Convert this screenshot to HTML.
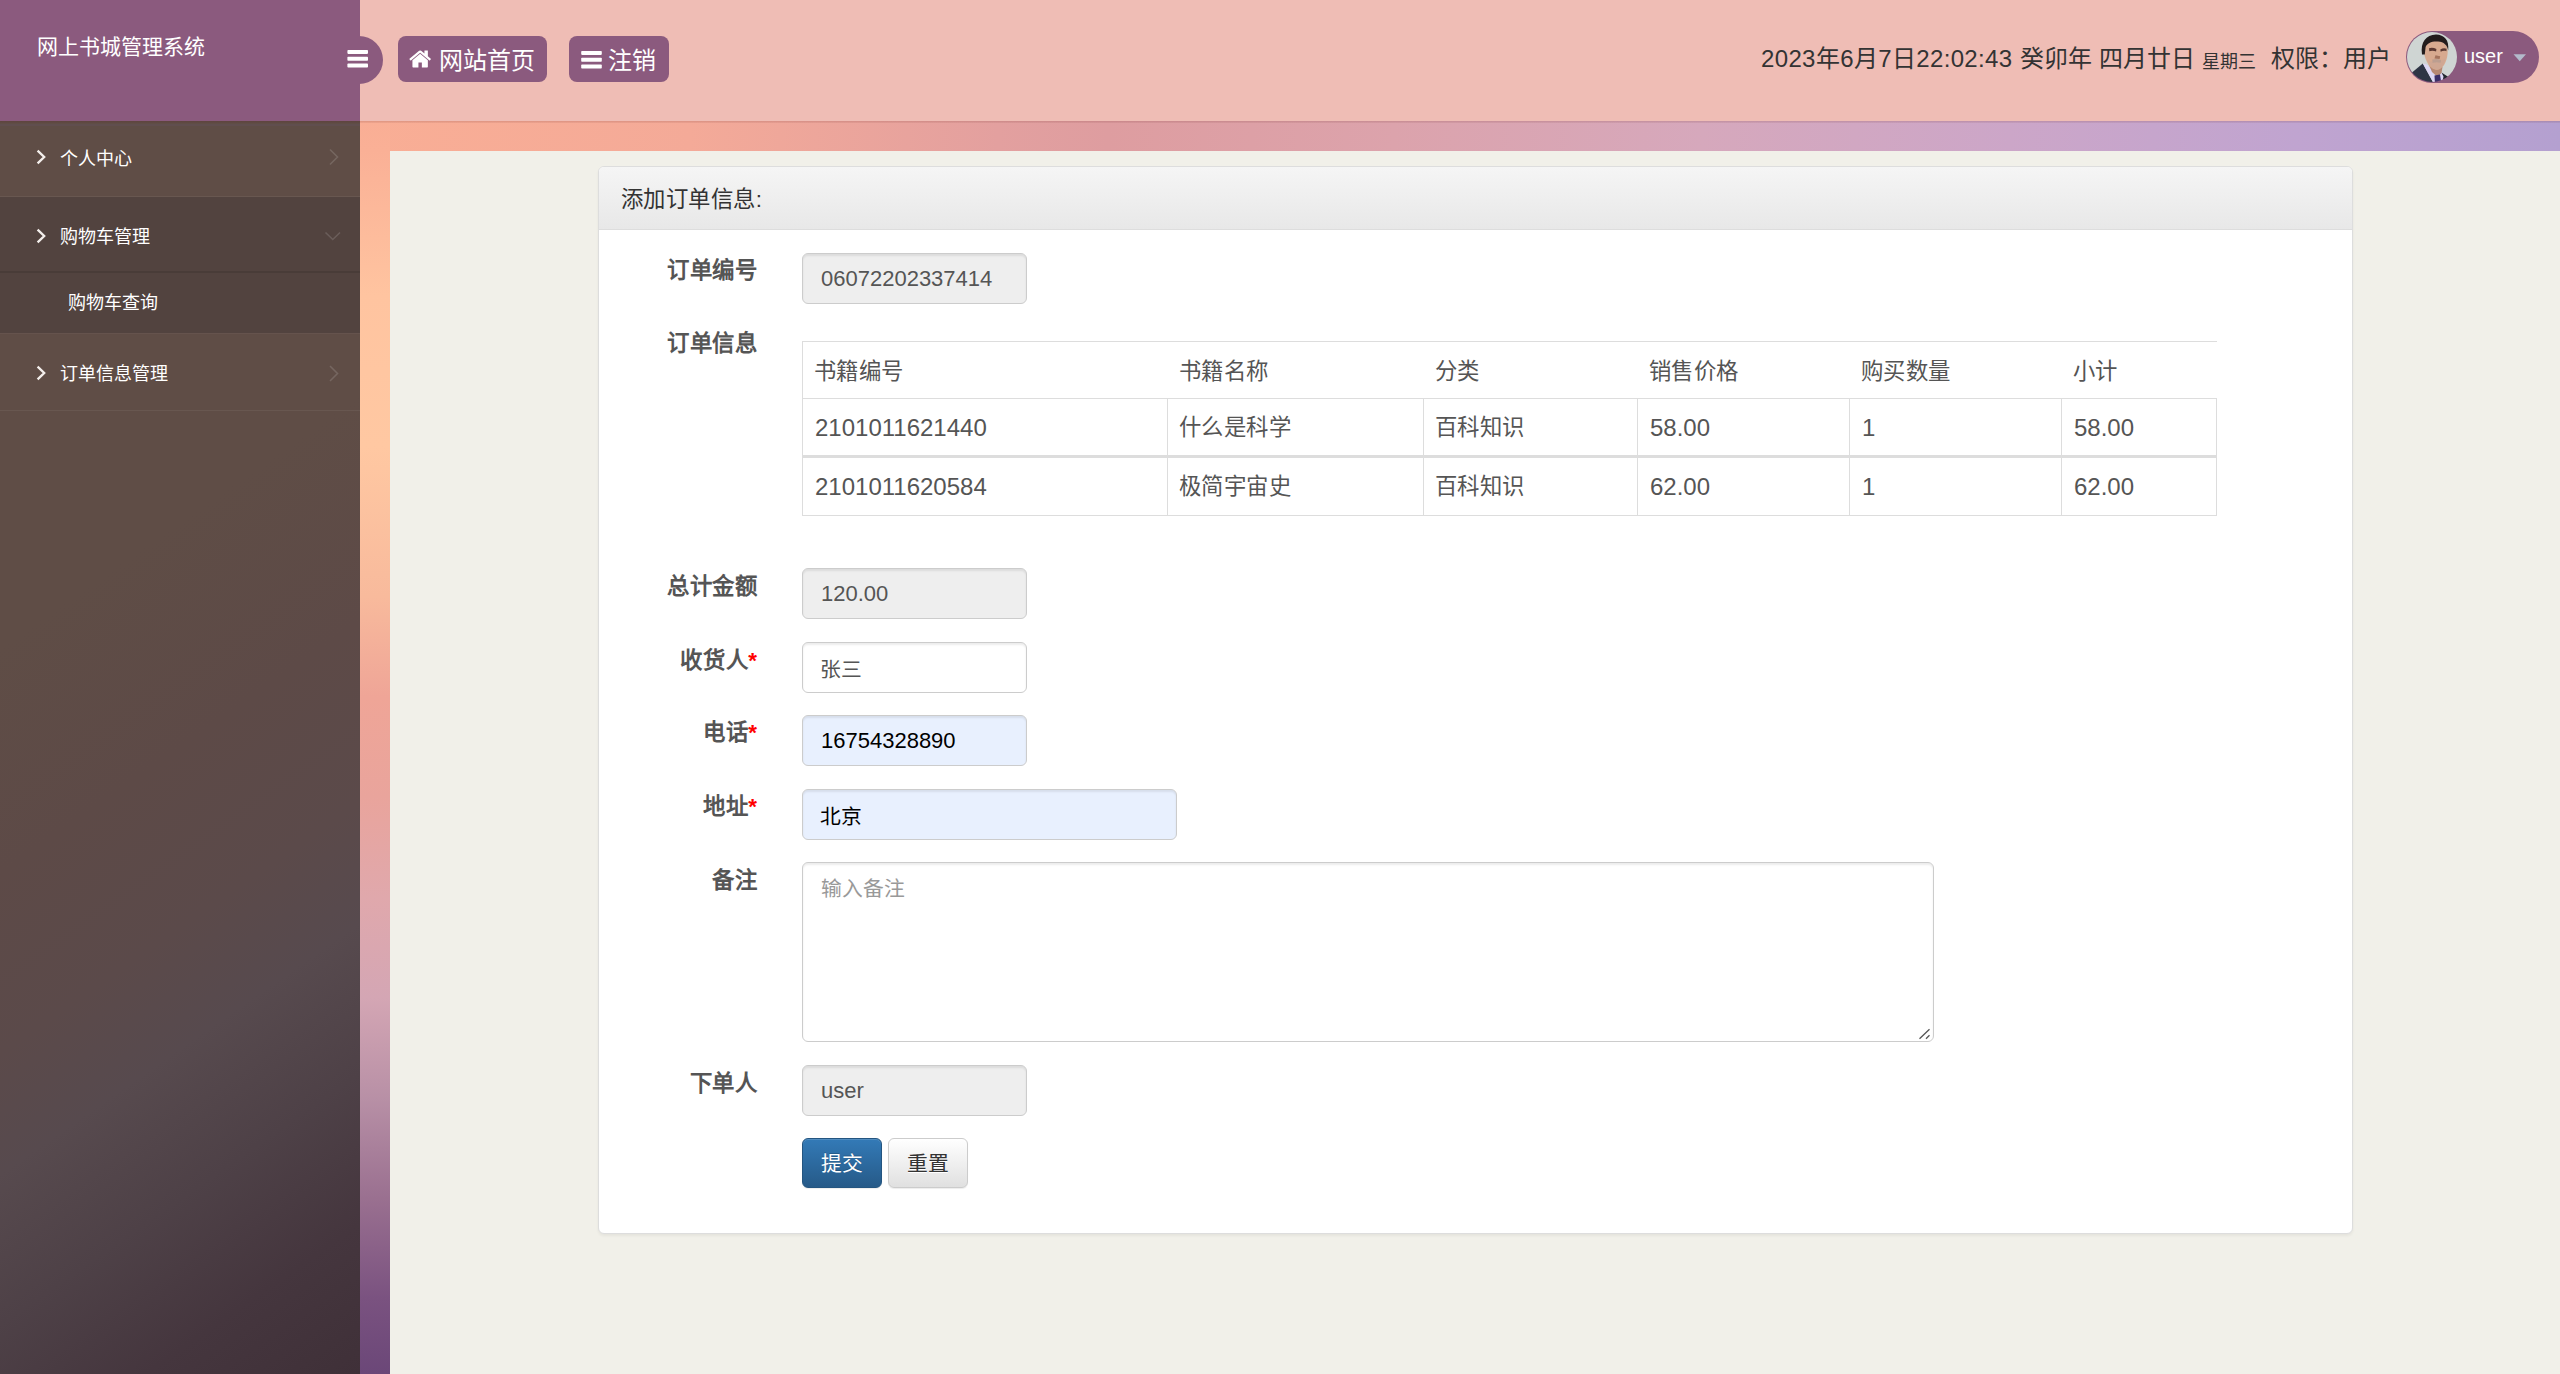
<!DOCTYPE html>
<html lang="zh-CN">
<head>
<meta charset="utf-8">
<title>网上书城管理系统</title>
<style>
*{box-sizing:border-box;margin:0;padding:0}
html,body{width:2560px;height:1374px;overflow:hidden}
body{position:relative;font-family:"Liberation Sans",sans-serif;background:#f1f0e9;color:#555}
.abs{position:absolute}
/* background strips */
#bgTop{left:360px;top:120px;width:2200px;height:31px;
 background:linear-gradient(90deg,#f9ae95 0%,#f4aa98 15%,#e3a09f 29%,#de9da0 34%,#dca3ac 47%,#d6a8bc 61%,#cca6c8 75%,#c0a4d0 88%,#b4a0d0 100%)}
#bgLeft{left:360px;top:120px;width:30px;height:1254px;
 background:linear-gradient(180deg,#f9ae95 0%,#fab096 2.4%,#ffc4a0 14%,#ffc8a2 26%,#f8ba9c 38%,#efa597 46%,#e9a49c 54%,#e0a8ac 62%,#d4a6b4 70%,#b890a6 78%,#9a7090 86%,#7a5280 94%,#6b4778 100%)}
#content{left:390px;top:151px;width:2170px;height:1223px;background:#f1f0e9}
/* sidebar */
#brand{left:0;top:0;width:360px;height:121px;background:#8b5a7e}
#brand span{left:37px;top:33px;font-size:21px;line-height:28px;color:#fff;white-space:nowrap}
#sidebar{left:0;top:121px;width:360px;height:1253px;
 background:linear-gradient(145deg,#5f4d46 0%,#5f4d46 35%,#5d4a47 50%,#5b4a4a 62%,#574a4e 70%,#4e4147 80%,#45363e 90%,#3f3038 100%)}
.mi{left:0;width:360px;color:#fff;font-size:18px;white-space:nowrap}
.mi span{position:absolute;line-height:24px}
/* header */
#header{left:0;top:0;width:2560px;height:121px;background:#efbdb5;}
.hbtn{background:#8b5a7e;border-radius:8px;color:#fff;font-size:24px;white-space:nowrap}
.hbtn span{position:absolute;line-height:30px}
.ht{color:#333;font-size:24px;line-height:30px;white-space:nowrap}
/* panel */
#panel{left:598px;top:166px;width:1755px;height:1068px;background:#fff;border:1px solid #ddd;border-radius:6px;box-shadow:0 2px 3px rgba(0,0,0,.05)}
#phead{left:0;top:0;width:1753px;height:63px;background:linear-gradient(180deg,#f5f5f5,#e8e8e8);border-bottom:1px solid #ddd;border-radius:5px 5px 0 0}
#phead span{left:22px;top:18.1px;letter-spacing:.45px;font-size:22.4px;line-height:30px;color:#333;white-space:nowrap}
.lbl{width:200px;text-align:right;letter-spacing:.6px;margin-left:.6px;font-weight:bold;font-size:22.4px;line-height:30px;color:#555;white-space:nowrap}
.lbl b{color:#f00}
.inp{height:51px;border:1px solid #ccc;border-radius:6px;background:#fff;box-shadow:inset 0 2px 2px rgba(0,0,0,.075);font-size:22px;color:#555;white-space:nowrap}
.inp span{position:absolute;left:18px;top:11px;line-height:28px}
.inp.dis{background:#eee}
.inp.af{background:#e8f0fe;color:#000}

.tl{background:#ddd}
.th,.td{white-space:nowrap;color:#555;line-height:30px}
.th{font-size:22.4px;letter-spacing:.45px;margin-left:-1px}
.td{font-size:22.4px;letter-spacing:.45px;margin-left:-1px}
.td.n{font-size:24px;letter-spacing:0;margin-left:0}
.btn{height:50px;width:80px;border-radius:6px;font-size:20.8px;text-align:center;line-height:49.5px;white-space:nowrap}
</style>
</head>
<body>
<div id="bgTop" class="abs"></div>
<div id="bgLeft" class="abs"></div>
<div id="content" class="abs"></div>
<div id="header" class="abs"></div>
<!-- header widgets -->
<div class="abs" style="left:335px;top:36px;width:48px;height:48px;border-radius:24px;background:#8b5a7e"></div>
<svg class="abs" style="left:347px;top:49px;z-index:5" width="22" height="20" viewBox="0 0 22 20"><g fill="#fff"><rect x=".4" y="1" width="20.6" height="3.9" rx=".8"/><rect x=".4" y="7.8" width="20.6" height="3.9" rx=".8"/><rect x=".4" y="14.6" width="20.6" height="3.9" rx=".8"/></g></svg>
<div class="abs hbtn" style="left:398px;top:36px;width:149px;height:46px">
 <svg class="abs" style="left:11.4px;top:11.4px" width="22.3" height="24" viewBox="0 0 1664 1792"><path fill="#fff" d="M1408 992v480q0 26-19 45t-45 19h-384v-384h-256v384h-384q-26 0-45-19t-19-45v-480q0-1 .5-3t.5-3l575-474 575 474q1 2 1 6zm223-69l-62 74q-8 9-21 11h-3q-13 0-21-7l-692-577-692 577q-12 8-24 7-13-2-21-11l-62-74q-8-10-7-23.500t11-21.500l719-599q32-26 76-26t76 26l244 204v-195q0-14 9-23t23-9h192q14 0 23 9t9 23v408l219 182q10 8 11 21.500t-7 23.500z"/></svg>
 <span style="left:41px;top:9.5px">网站首页</span>
</div>
<div class="abs hbtn" style="left:569px;top:36px;width:100px;height:46px">
 <svg class="abs" style="left:12px;top:14px" width="22" height="20" viewBox="0 0 22 20"><g fill="#fff"><rect x=".2" y="1" width="20.6" height="3.9" rx=".8"/><rect x=".2" y="7.8" width="20.6" height="3.9" rx=".8"/><rect x=".2" y="14.6" width="20.6" height="3.9" rx=".8"/></g></svg>
 <span style="left:39px;top:9.5px">注销</span>
</div>
<span class="abs ht" style="left:1761px;top:43.5px;letter-spacing:.35px">2023年6月7日22:02:43</span>
<span class="abs ht" style="left:2020px;top:43.5px">癸卯年</span>
<span class="abs ht" style="left:2099px;top:43.5px">四月廿日</span>
<span class="abs ht" style="left:2202px;top:49.5px;font-size:18px;line-height:24px">星期三</span>
<span class="abs ht" style="left:2271px;top:43.5px">权限：用户</span>
<div class="abs" style="left:2406px;top:31px;width:133px;height:52px;border-radius:26px;background:#8b5a7e"></div>
<svg class="abs" style="left:2407px;top:32px" width="50" height="50" viewBox="0 0 50 50">
 <defs><clipPath id="av"><circle cx="25" cy="25" r="25"/></clipPath><filter id="bl" x="-10%" y="-10%" width="120%" height="120%"><feGaussianBlur stdDeviation=".75"/></filter></defs>
 <g clip-path="url(#av)"><g filter="url(#bl)">
  <rect x="-5" y="-5" width="60" height="60" fill="#cfd5d3"/>
  <path d="M2 43 L15.800 31.400 L27 52 L2 52Z" fill="#2f3545"/>
  <path d="M34.500 40.500 L41.500 45 L45 52 L33 52Z" fill="#23262f"/>
  <path d="M15.800 31.400 L20 32.500 L30 44 L34.500 40.500 L36.500 44.500 L35 52 L27 52Z" fill="#dcd6f4"/>
  <path d="M21.500 32 L35.500 35 L34.500 41 L30.500 45 L25 40Z" fill="#b68873"/>
  <path d="M27.500 43.500 L33 42.500 L34.500 52 L28 52Z" fill="#3a2f68"/>
  <path d="M16.800 17 C16.800 11 21 8.300 28 8.300 C36 8.300 40.700 12 40.700 19 C40.700 27 37.500 35 32 37.500 C28 39 23 36 20 30 C18 26 16.800 22 16.800 17Z" fill="#d7a98f"/>
  <path d="M20.500 28 C25 31 33 31 38.500 26 C37 33 34.500 36.500 31.500 37.600 C27.500 38.600 23.500 35 20.500 28Z" fill="#c8a598" opacity=".55"/>
  <path d="M15 22.500 C13.300 10 19 3 29 2.600 C37.500 3 42.300 8 41.200 18.500 C40.200 13 37 10 31 9.500 C25 9 20 11 18.600 15 L17.800 22.500Z" fill="#211b1e"/>
  <path d="M22 16.300 C24 15.300 27 15.600 29.400 17 L29.100 19.500 C27 18.400 24 18.400 22.300 19.200Z" fill="#5a3933"/>
  <path d="M33.300 17.400 C35.500 16 38 16 39.600 16.800 L39.400 19.200 C37.500 18.600 35.500 18.800 33.700 19.800Z" fill="#5a3933"/>
  <path d="M28.500 23.300 L33.200 24.300 L32.600 27 L27.500 26.500Z" fill="#a4735d"/>
  <path d="M25.300 27.600 C28 26.600 31.500 26.900 34 28.100 L33.600 30.700 C31 30 28 30 25.500 30.700Z" fill="#b59b90" opacity=".8"/>
 </g></g>
</svg>
<span class="abs" style="left:2464px;top:43px;font-size:20px;line-height:26px;color:#fff">user</span>
<svg class="abs" style="left:2513px;top:54px" width="14" height="8" viewBox="0 0 14 8"><path d="M.5 .3 L13 .3 L6.750 7.200Z" fill="#b3bacb"/></svg>
<div id="brand" class="abs"><span class="abs">网上书城管理系统</span></div>
<div id="sidebar" class="abs"></div>
<!-- sidebar menu -->
<div class="abs" style="left:0;top:197px;width:360px;height:136px;background:rgba(20,15,30,.17)"></div>
<div class="abs" style="left:0;top:196px;width:360px;height:1px;background:rgba(255,255,255,.06)"></div>
<div class="abs" style="left:0;top:271px;width:360px;height:2px;background:rgba(0,0,0,.10)"></div>
<div class="abs" style="left:0;top:333px;width:360px;height:1px;background:rgba(255,255,255,.04)"></div>
<div class="abs" style="left:0;top:410px;width:360px;height:1px;background:rgba(255,255,255,.06)"></div>
<svg class="abs" style="left:0;top:121px" width="360" height="300" viewBox="0 121 360 300" fill="none" stroke-linecap="butt" stroke-linejoin="miter">
 <g stroke="#f4efec" stroke-width="2.3">
  <polyline points="37.6,150.6 44.2,157 37.6,163.4"/>
  <polyline points="37.6,229.6 44.2,236 37.6,242.4"/>
  <polyline points="37.6,366.6 44.2,373 37.6,379.4"/>
 </g>
 <g stroke="rgba(255,255,255,.14)" stroke-width="1.6">
  <polyline points="330,149.5 337.5,157 330,164.5"/>
  <polyline points="325.5,232.5 332.8,239.5 340,232.5"/>
  <polyline points="330,366 337.5,373.5 330,381"/>
 </g>
</svg>
<div class="abs mi" style="top:146.7px"><span style="left:60px;top:0">个人中心</span></div>
<div class="abs mi" style="top:225.4px"><span style="left:60px;top:0">购物车管理</span></div>
<div class="abs mi" style="top:291.4px"><span style="left:68px;top:0">购物车查询</span></div>
<div class="abs mi" style="top:362.4px"><span style="left:60px;top:0">订单信息管理</span></div>
<div id="panel" class="abs"><div id="phead" class="abs"><span class="abs">添加订单信息:</span></div></div>
<div class="abs" style="left:0;top:121px;width:2560px;height:2px;z-index:6;background:linear-gradient(180deg,rgba(95,25,25,.17),rgba(95,25,25,.06))"></div>
<div class="abs" style="left:0;top:124px;width:360px;height:2px;z-index:6;background:rgba(110,85,140,.13)"></div>
<!-- form -->
<div class="abs lbl" style="left:557px;top:256.2px">订单编号</div>
<div class="abs inp dis" style="left:802px;top:253px;width:225px;height:51px"><span>06072202337414</span></div>
<div class="abs lbl" style="left:557px;top:329.2px">订单信息</div>
<div class="abs tl" style="left:802px;top:341px;width:1415px;height:1px"></div>
<div class="abs tl" style="left:802px;top:398px;width:1415px;height:1px"></div>
<div class="abs tl" style="left:802px;top:455px;width:1415px;height:3px"></div>
<div class="abs tl" style="left:802px;top:515px;width:1415px;height:1px"></div>
<div class="abs tl" style="left:802px;top:341px;width:1px;height:175px"></div>
<div class="abs tl" style="left:1167px;top:398px;width:1px;height:118px"></div>
<div class="abs tl" style="left:1423px;top:398px;width:1px;height:118px"></div>
<div class="abs tl" style="left:1637px;top:398px;width:1px;height:118px"></div>
<div class="abs tl" style="left:1849px;top:398px;width:1px;height:118px"></div>
<div class="abs tl" style="left:2061px;top:398px;width:1px;height:118px"></div>
<div class="abs tl" style="left:2216px;top:398px;width:1px;height:118px"></div>
<span class="abs th" style="left:815px;top:356.5px">书籍编号</span>
<span class="abs th" style="left:1180px;top:356.5px">书籍名称</span>
<span class="abs th" style="left:1436px;top:356.5px">分类</span>
<span class="abs th" style="left:1650px;top:356.5px">销售价格</span>
<span class="abs th" style="left:1862px;top:356.5px">购买数量</span>
<span class="abs th" style="left:2074px;top:356.5px">小计</span>
<span class="abs td n" style="left:815px;top:412.5px">2101011621440</span>
<span class="abs td" style="left:1180px;top:412.5px">什么是科学</span>
<span class="abs td" style="left:1436px;top:412.5px">百科知识</span>
<span class="abs td n" style="left:1650px;top:412.5px">58.00</span>
<span class="abs td n" style="left:1862px;top:412.5px">1</span>
<span class="abs td n" style="left:2074px;top:412.5px">58.00</span>
<span class="abs td n" style="left:815px;top:471.5px">2101011620584</span>
<span class="abs td" style="left:1180px;top:471.5px">极简宇宙史</span>
<span class="abs td" style="left:1436px;top:471.5px">百科知识</span>
<span class="abs td n" style="left:1650px;top:471.5px">62.00</span>
<span class="abs td n" style="left:1862px;top:471.5px">1</span>
<span class="abs td n" style="left:2074px;top:471.5px">62.00</span>
<div class="abs lbl" style="left:557px;top:571.6px">总计金额</div>
<div class="abs inp dis" style="left:802px;top:568px;width:225px;height:51px"><span>120.00</span></div>
<div class="abs lbl" style="left:557px;top:645.5px">收货人<b>*</b></div>
<div class="abs inp " style="left:802px;top:642px;width:225px;height:51px"><span style="top:12.5px;left:16.5px;font-size:20.8px;letter-spacing:.8px">张三</span></div>
<div class="abs lbl" style="left:557px;top:718.4px">电话<b>*</b></div>
<div class="abs inp af" style="left:802px;top:715px;width:225px;height:51px"><span>16754328890</span></div>
<div class="abs lbl" style="left:557px;top:792.2px">地址<b>*</b></div>
<div class="abs inp af" style="left:802px;top:789px;width:375px;height:51px"><span style="top:12.5px;left:16.5px;font-size:20.8px;letter-spacing:.8px">北京</span></div>
<div class="abs lbl" style="left:557px;top:865.5px">备注</div>
<div class="abs inp" style="left:802px;top:862px;width:1132px;height:180px"><span style="color:#999;font-size:20.8px;top:11.7px">输入备注</span><svg class="abs" style="right:1px;bottom:1px" width="14" height="14" viewBox="0 0 14 14"><path d="M1.500 12.800 L11.500 3.200 M8 12.800 L11.500 9.300" stroke="#555" stroke-width="1.300" fill="none"/></svg></div>
<div class="abs lbl" style="left:557px;top:1068.5px">下单人</div>
<div class="abs inp dis" style="left:802px;top:1065px;width:225px;height:51px"><span>user</span></div>
<div class="abs btn" style="left:802px;top:1138px;color:#fff;background:linear-gradient(180deg,#337ab7,#265a88);border:1px solid #245580;box-shadow:inset 0 1px 0 rgba(255,255,255,.15),0 1px 1px rgba(0,0,0,.075);text-shadow:0 -1px 0 rgba(0,0,0,.2)">提交</div>
<div class="abs btn" style="left:888px;top:1138px;color:#333;background:linear-gradient(180deg,#fff,#e0e0e0);border:1px solid #ccc;box-shadow:inset 0 1px 0 rgba(255,255,255,.15),0 1px 1px rgba(0,0,0,.075);text-shadow:0 1px 0 #fff">重置</div>
</body>
</html>
